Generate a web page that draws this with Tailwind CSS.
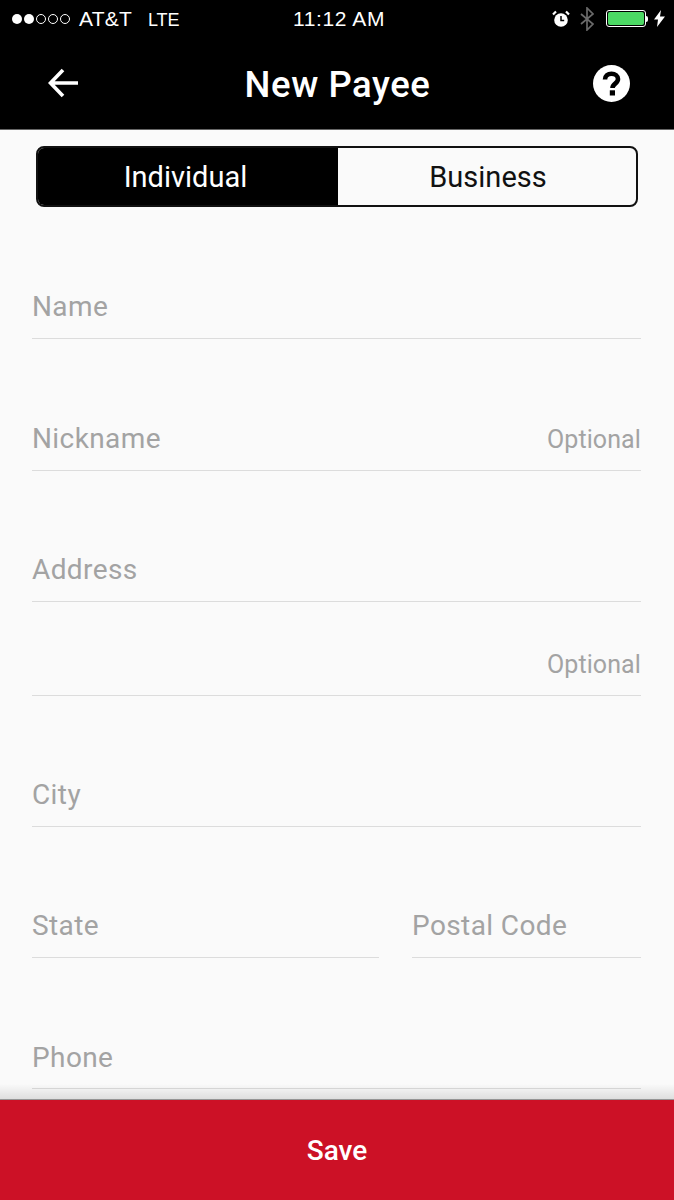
<!DOCTYPE html>
<html><head><meta charset="utf-8"><script src="https://cdn.jsdelivr.net/npm/@tailwindcss/browser@4"></script></head>
<body class="m-0">
<div class="relative flex h-[1200px] w-[674px] flex-col overflow-hidden bg-[#fafafa] font-['Roboto',sans-serif]">
  <header class="h-[130px] shrink-0 border-b border-[#666] bg-black text-white">
    <div class="flex h-[37px] items-center pl-3 font-['Liberation_Sans',sans-serif] text-[21px]">
      <div class="flex w-[281px] items-center">
        <div class="flex gap-[2px]">
          <span class="h-[10px] w-[10px] rounded-full bg-white"></span><span class="h-[10px] w-[10px] rounded-full bg-white"></span>
          <span class="h-[10px] w-[10px] rounded-full border border-white"></span><span class="h-[10px] w-[10px] rounded-full border border-white"></span><span class="h-[10px] w-[10px] rounded-full border border-white"></span>
        </div>
        <span class="ml-[9px] tracking-[0.2px]">AT&amp;T</span><span class="ml-[16px] pt-[2px] text-[18px] leading-none">LTE</span>
      </div>
      <span class="w-[259px] tracking-[0.6px]">11:12 AM</span>
      <div class="flex items-center">
        <svg width="18" height="18" viewBox="0 0 18 18"><circle cx="9" cy="10" r="6.8" fill="#fff"/><path d="M9 6v4.500h3.200" fill="none" stroke="#000" stroke-width="1.500"/><path d="M1 4.500l3-3M17 4.500l-3-3" stroke="#fff" stroke-width="2.200"/></svg>
        <svg class="ml-[10px]" width="14" height="24" viewBox="0 0 14 24"><path d="M1 7l12 10-6 6V1l6 6L1 17" fill="none" stroke="#6a6a6a" stroke-width="1.700"/></svg>
        <div class="ml-[12px] flex items-center">
          <div class="h-[17px] w-[40px] rounded-[3px] border border-white p-[1px]"><div class="h-full rounded-[2px] bg-[#4cd964]"></div></div>
          <span class="h-[6px] w-[2px] rounded-r-full bg-white"></span>
          <svg class="ml-[6px]" width="11" height="17" viewBox="0 0 11 17"><path d="M7 0L0 9.500h4L3 17l8-10.500H6z" fill="#fff"/></svg>
        </div>
      </div>
    </div>
    <div class="flex h-[92px] items-center justify-between pl-[47px] pr-[44px]">
      <svg width="32" height="32" viewBox="0 0 32 32"><path d="M31 16H4M16 3L3.500 16 16 29" fill="none" stroke="#fff" stroke-width="3.600"/></svg>
      <h1 class="ml-[3px] pt-[4px] text-[36.5px] font-medium leading-none tracking-[0.55px]">New Payee</h1>
      <svg width="37" height="37" viewBox="0 0 37 37"><circle cx="18.500" cy="18.500" r="18.500" fill="#fff"/><path d="M12 14.500c0-3.500 2.800-5.800 6.500-5.800s6.500 2.200 6.500 5.300c0 4.700-5.500 4.500-5.500 9" fill="none" stroke="#000" stroke-width="4.600"/><rect x="16.800" y="25.300" width="5.200" height="5.200" fill="#000"/></svg>
    </div>
  </header>
  <main class="flex-1 pl-8 pr-[33px]">
    <div class="ml-[4px] mr-[3px] mt-[16px] flex h-[61px] overflow-hidden rounded-[8px] border-2 border-[#111] text-[29px] leading-none">
      <div class="flex w-[300px] items-center justify-center bg-black pr-[5px] pt-[2px] text-white">Individual</div>
      <div class="flex flex-1 items-center justify-center pl-[2px] pt-[2px] text-[#111]">Business</div>
    </div>
    <div class="mt-[70px] flex h-[62px] items-center border-b border-[#dcdcdc] pb-[2px] text-[28px] tracking-[0.4px] text-[#a3a3a3]">Name</div>
    <div class="mt-[70px] flex h-[62px] items-center justify-between border-b border-[#dcdcdc] pb-[2px] text-[28px] tracking-[0.4px] text-[#a3a3a3]">Nickname<span class="pt-[3px] text-[25px] tracking-[0.1px]">Optional</span></div>
    <div class="mt-[69px] flex h-[62px] items-center border-b border-[#dcdcdc] pb-[2px] text-[28px] tracking-[0.4px] text-[#a3a3a3]">Address</div>
    <div class="mt-[32px] flex h-[62px] items-center justify-end border-b border-[#dcdcdc] pt-[1px] text-[25px] tracking-[0.1px] text-[#a3a3a3]">Optional</div>
    <div class="mt-[69px] flex h-[62px] items-center border-b border-[#dcdcdc] pb-[2px] text-[28px] tracking-[0.4px] text-[#a3a3a3]">City</div>
    <div class="mt-[69px] flex gap-[33px]">
      <div class="flex h-[62px] flex-1 items-center border-b border-[#dcdcdc] pb-[2px] text-[28px] tracking-[0.4px] text-[#a3a3a3]">State</div>
      <div class="flex h-[62px] w-[229px] items-center border-b border-[#dcdcdc] pb-[2px] text-[28px] tracking-[0.4px] text-[#a3a3a3]">Postal Code</div>
    </div>
    <div class="mt-[69px] flex h-[62px] items-center border-b border-[#dcdcdc] text-[28px] tracking-[0.4px] text-[#a3a3a3]">Phone</div>
  </main>
  <footer class="absolute bottom-0 left-0 flex h-[101px] w-full items-center justify-center border-t border-[#a8a8a8] bg-[#cc1126] pt-[2px] text-[28px] font-medium text-white">
    <div class="absolute bottom-full left-0 h-[16px] w-full bg-linear-to-b from-transparent to-black/12"></div>
    Save
  </footer>
</div>
</body></html>
